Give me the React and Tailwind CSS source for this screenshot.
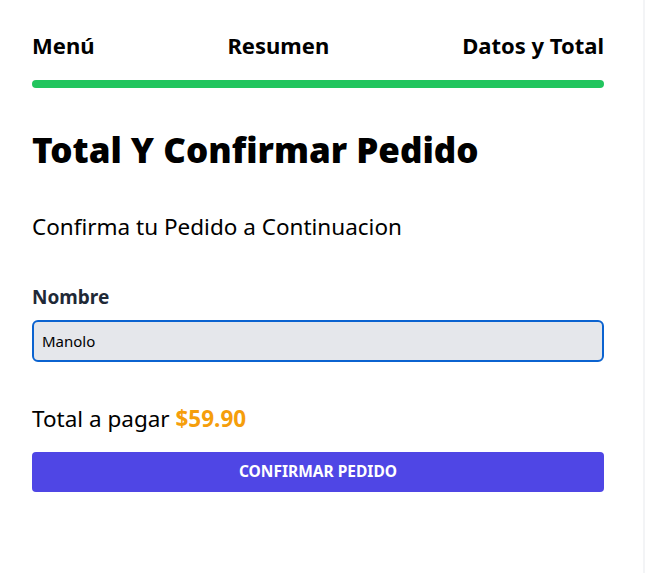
import React, { useState } from 'react';

function App() {
  const [nombre, setNombre] = useState('Manolo');
  const pasos = ['Menú', 'Resumen', 'Datos y Total'];

  return (
    <div className="min-h-screen bg-white flex" style={{ fontFamily: '"Noto Sans", "Open Sans", sans-serif' }}>
      <main className="flex-1 pl-8 pr-[39px] pt-[29px]">
        {/* PASOS */}
        <div className="flex justify-between">
          {pasos.map((p) => (
            <p key={p} className="text-[22px] font-bold text-black leading-8">{p}</p>
          ))}
        </div>
        <div className="mt-[19px] h-[8px] rounded-full bg-[#22c55e]" />

        <h1 className="mt-[40px] text-[35px] font-black text-black leading-[44px]">Total Y Confirmar Pedido</h1>
        <p className="mt-[39px] text-[22.5px] text-black leading-8">Confirma tu Pedido a Continuacion</p>

        <form className="mt-[40px]" onSubmit={(e) => e.preventDefault()}>
          <label htmlFor="nombre" className="block text-[19px] font-bold text-[#1f2937] leading-7">Nombre</label>
          <input
            id="nombre"
            value={nombre}
            onChange={(e) => setNombre(e.target.value)}
            className="mt-[9px] w-full h-[42px] px-2 rounded-md bg-[#e5e7eb] border-2 border-[#0b63d0] text-[15px] text-black outline-none"
          />

          <p className="mt-[41px] text-[22.5px] text-black leading-8">
            Total a pagar <span className="font-bold text-[#f59e0b]">$59.90</span>
          </p>

          <button type="submit" className="mt-[17px] w-full h-[40px] rounded bg-[#4f46e5] text-white text-[15.5px] font-bold uppercase">
            Confirmar Pedido
          </button>
        </form>
      </main>
      <div className="w-[2px] bg-gray-100" />
    </div>
  );
}

export default App;
